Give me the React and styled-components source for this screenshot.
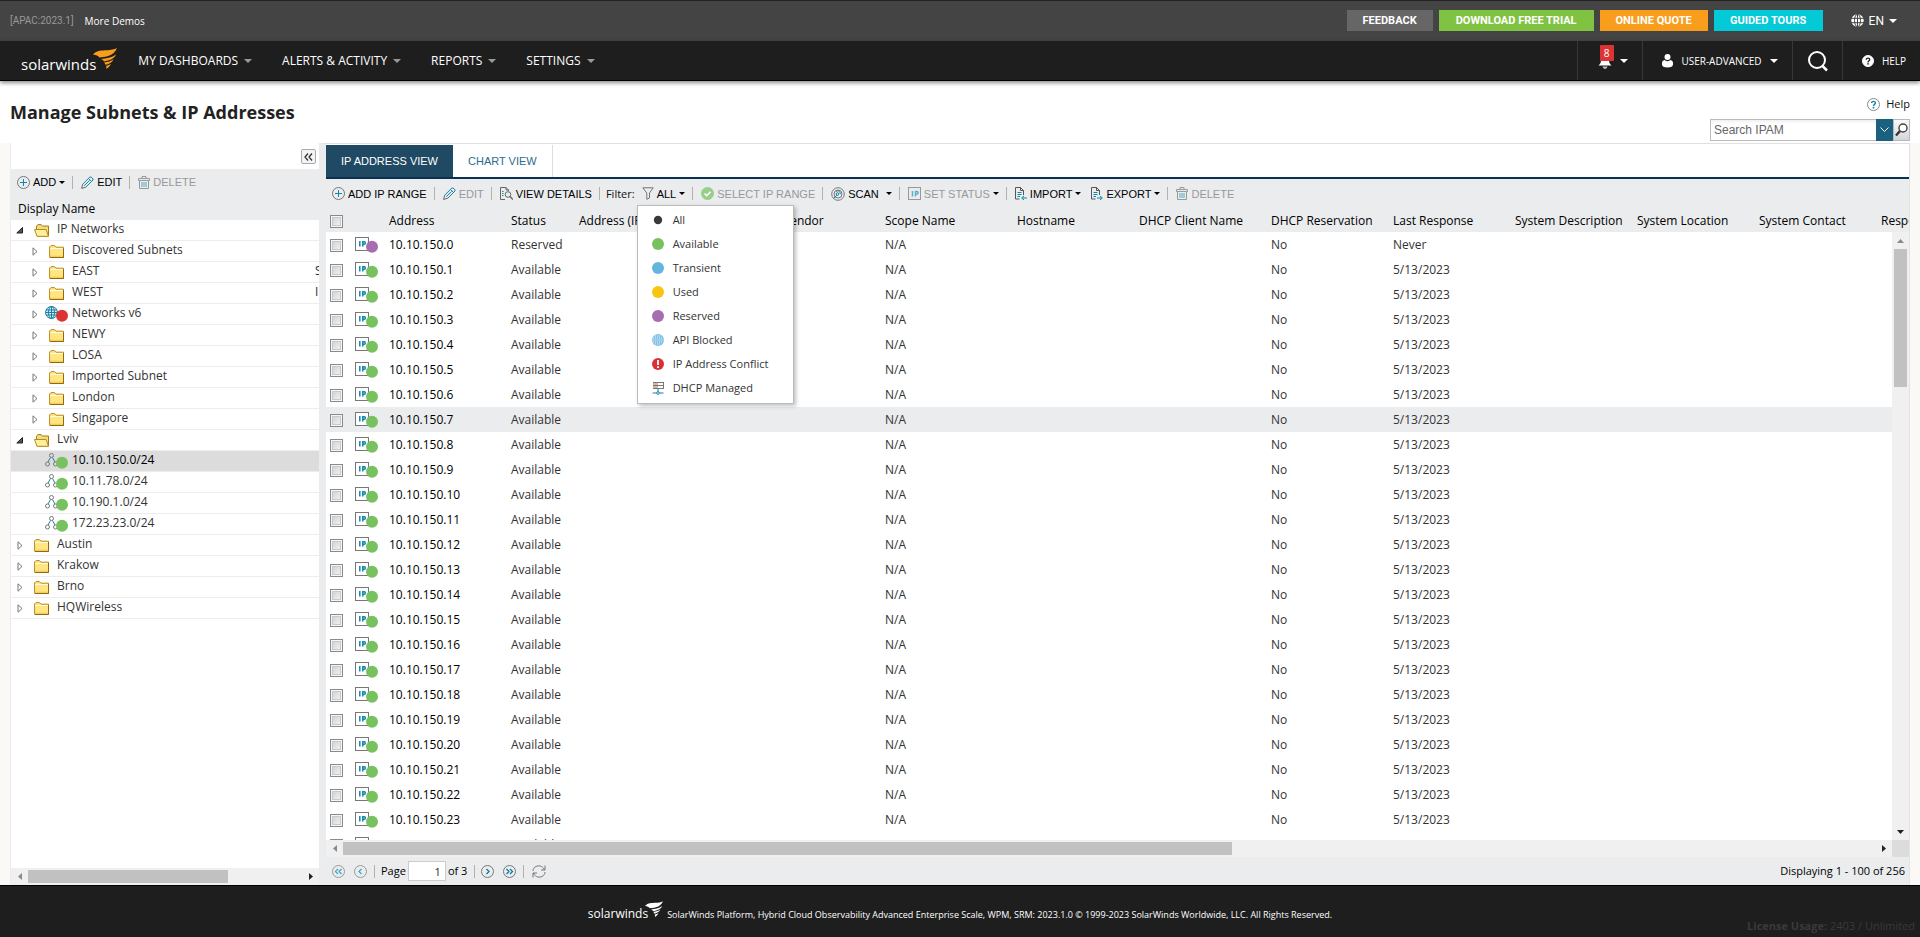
import React, { useState } from 'react';
import styled, { createGlobalStyle } from 'styled-components';

const treeRows = [
  { label: 'IP Networks', level: 0, icon: 'open', open: true },
  { label: 'Discovered Subnets', level: 1, icon: 'folder' },
  { label: 'EAST', level: 1, icon: 'folder', extra: 'S' },
  { label: 'WEST', level: 1, icon: 'folder', extra: 'I' },
  { label: 'Networks v6', level: 1, icon: 'globe' },
  { label: 'NEWY', level: 1, icon: 'folder' },
  { label: 'LOSA', level: 1, icon: 'folder' },
  { label: 'Imported Subnet', level: 1, icon: 'folder' },
  { label: 'London', level: 1, icon: 'folder' },
  { label: 'Singapore', level: 1, icon: 'folder' },
  { label: 'Lviv', level: 0, icon: 'open', open: true },
  { label: '10.10.150.0/24', level: 1, icon: 'subnet', leaf: true, selected: true },
  { label: '10.11.78.0/24', level: 1, icon: 'subnet', leaf: true },
  { label: '10.190.1.0/24', level: 1, icon: 'subnet', leaf: true },
  { label: '172.23.23.0/24', level: 1, icon: 'subnet', leaf: true },
  { label: 'Austin', level: 0, icon: 'folder' },
  { label: 'Krakow', level: 0, icon: 'folder' },
  { label: 'Brno', level: 0, icon: 'folder' },
  { label: 'HQWireless', level: 0, icon: 'folder' },
];

const columns = [
  { name: 'Address', width: 122 },
  { name: 'Status', width: 68 },
  { name: 'Address (IPv6)', width: 102 },
  { name: 'MAC', width: 102 },
  { name: 'Vendor', width: 102 },
  { name: 'Scope Name', width: 132 },
  { name: 'Hostname', width: 122 },
  { name: 'DHCP Client Name', width: 132 },
  { name: 'DHCP Reservation', width: 122 },
  { name: 'Last Response', width: 122 },
  { name: 'System Description', width: 122 },
  { name: 'System Location', width: 122 },
  { name: 'System Contact', width: 122 },
  { name: 'Response Time', width: 122 },
];

const addresses = Array.from({ length: 25 }, (_, i) => ({
  ip: `10.10.150.${i}`,
  status: i === 0 ? 'Reserved' : 'Available',
  last: i === 0 ? 'Never' : '5/13/2023',
}));

const filters = ['All', 'Available', 'Transient', 'Used', 'Reserved', 'API Blocked', 'IP Address Conflict', 'DHCP Managed'];

const statusColors = {
  Available: '#77c25f',
  Transient: '#65b5e0',
  Used: '#f8c611',
  Reserved: '#a66eb0',
};

/* icons */

const Swirl = ({ color, width, height }) => (
  <svg width={width} height={height} viewBox="0 0 24 21" fill={color} aria-hidden="true">
    <path d="M0 6.5C4 2 9 2.500 14 2.200C18 2 21 1.500 24 0C22.500 4 19 7 14.500 8.200C11 9.200 9 9 6.500 9.500C5.500 8 3 6.800 0 6.500Z" />
    <path d="M8 11C13 10.500 19 9.500 23 6.500C21.500 10.500 16.500 12.500 11 13.500C10.500 12.500 9.500 11.500 8 11Z" />
    <path d="M11 14.500C15 14 18 13 20.500 11.200C19.500 14 16.500 15.800 12.500 16.800C12.300 16 11.700 15 11 14.500Z" />
    <path d="M13 17.800C15 17.400 16.500 16.800 18 15.700C17 18 15.500 19.700 13.200 21C13.500 20 13.500 18.800 13 17.800Z" />
  </svg>
);

const GlobeIcon = () => (
  <svg width="13" height="13" viewBox="0 0 13 13" fill="none" aria-hidden="true">
    <circle cx="6.500" cy="6.500" r="6.200" fill="#fff" />
    <path d="M0 4.300H13M0 8.700H13M6.500 0V13" stroke="#444" />
    <ellipse cx="6.500" cy="6.500" rx="3" ry="6.200" stroke="#444" />
  </svg>
);

const BellIcon = () => (
  <svg width="14" height="16" viewBox="0 0 14 16" fill="#fff" aria-hidden="true">
    <path d="M7 1C4 1 3 4 3 7C3 9.500 2.500 10.500 0.500 12.500H13.500C11.500 10.500 11 9.500 11 7C11 4 10 1 7 1Z" />
    <path d="M4.500 13.500H9.500C9.200 15 8.200 16 7 16C5.800 16 4.800 15 4.500 13.500Z" fill="#bbb" />
  </svg>
);

const UserIcon = () => (
  <svg width="11" height="14" viewBox="0 0 11 14" fill="#fff" aria-hidden="true">
    <circle cx="5.500" cy="3" r="3" />
    <path d="M0 9C0 7.500 1 6.300 2.500 6C4 7.500 7 7.500 8.500 6C10 6.300 11 7.500 11 9V10.500C11 12.500 9 13.500 5.500 13.500C2 13.500 0 12.500 0 10.500Z" />
  </svg>
);

const SearchIcon = () => (
  <svg width="22" height="22" viewBox="0 0 22 22" fill="none" stroke="#fff" strokeWidth="2" aria-hidden="true">
    <circle cx="10" cy="10" r="8" />
    <path d="M15.500 16L20 20.500" strokeWidth="2.500" />
  </svg>
);

const QuestionIcon = ({ ring, fill, mark, size }) => (
  <svg width={size} height={size} viewBox="0 0 13 13" aria-hidden="true">
    <circle cx="6.500" cy="6.500" r="6" fill={fill} stroke={ring} />
    <path d="M4.600 5.100C4.600 2.800 8.400 2.900 8.400 5C8.400 6.400 6.500 6.300 6.500 8" fill="none" stroke={mark} strokeWidth="1.400" />
    <circle cx="6.500" cy="9.700" r="0.900" fill={mark} />
  </svg>
);

const LensIcon = () => (
  <svg width="13" height="14" viewBox="0 0 13 14" fill="none" aria-hidden="true">
    <circle cx="8" cy="5" r="4" stroke="#444" strokeWidth="1.400" fill="#fff" />
    <path d="M5 8L1 12.500" stroke="#333" strokeWidth="2.400" />
  </svg>
);

const PlusIcon = () => (
  <svg width="13" height="13" viewBox="0 0 13 13" fill="none" aria-hidden="true">
    <circle cx="6.500" cy="6.500" r="6" stroke="#777" />
    <path d="M6.500 3V10M3 6.500H10" stroke="#0f87ad" />
  </svg>
);

const PencilIcon = () => (
  <svg width="13" height="13" viewBox="0 0 13 13" fill="none" stroke="#1583a5" aria-hidden="true">
    <path d="M1.700 8.200L8.900 1C9.800 0.200 12.800 3 12 4L4.800 11.200" />
    <path d="M7.500 2.500L10.500 5.500M3.200 9.700L8.500 4.500" />
    <path d="M1.700 8.200L0.600 12.400L4.800 11.200" stroke="#666" />
  </svg>
);

const TrashIcon = () => (
  <svg width="12" height="13" viewBox="0 0 12 13" fill="none" stroke="#999" aria-hidden="true">
    <path d="M0.500 4.500V2.500H11.500V4.500H0.500M4 2V0.500H8V2M1.500 5V12.500H10.500V5" />
    <path d="M4 6V11M6 6V11M8 6V11" stroke="#53a9c4" />
  </svg>
);

const DetailsIcon = () => (
  <svg width="13" height="13" viewBox="0 0 13 13" fill="none" stroke="#666" aria-hidden="true">
    <path d="M5 12.500H0.500V0.500H6L8.500 3V4M6 0.500V3H8.500" />
    <circle cx="8" cy="7.500" r="2.800" />
    <path d="M10 9.500L13 12.500" strokeWidth="1.400" />
    <path d="M2 4.500H3.500M2 6.500H3.500M2 8.500H3.500" stroke="#0f87ad" />
  </svg>
);

const FunnelIcon = () => (
  <svg width="12" height="13" viewBox="0 0 12 13" fill="none" stroke="#777" aria-hidden="true">
    <path d="M0.800 0.800H11.200L7.500 6V11L4.800 12.300V6Z" />
  </svg>
);

const CheckIcon = () => (
  <svg width="13" height="13" viewBox="0 0 13 13" fill="none" aria-hidden="true">
    <circle cx="6.500" cy="6.500" r="6.500" fill="#97cf88" />
    <path d="M3.500 6.500L5.700 8.700L9.500 4.800" stroke="#fff" strokeWidth="1.600" />
  </svg>
);

const ScanIcon = () => (
  <svg width="14" height="14" viewBox="0 0 14 14" fill="none" stroke="#777" aria-hidden="true">
    <circle cx="7" cy="7" r="6.300" />
    <circle cx="7" cy="7" r="4" />
    <path d="M2.500 11.500L6 8M5 4.500C7 3 9.500 4.500 9.300 7" stroke="#0f87ad" />
    <circle cx="6.500" cy="7" r="1.300" stroke="#0f87ad" />
  </svg>
);

const IpBox = () => (
  <svg width="13" height="13" viewBox="0 0 13 13" fill="none" aria-hidden="true">
    <rect x="0.500" y="0.500" width="12" height="12" stroke="#999" />
    <path d="M4.500 4V9.500M7.500 9.500V4.500H9C10.500 4.500 10.500 7 9 7H8" stroke="#5ab2cd" strokeWidth="1.500" />
  </svg>
);

const FileIcon = ({ out }) => (
  <svg width="12" height="13" viewBox="0 0 12 13" fill="none" stroke="#555" aria-hidden="true">
    <path d="M4.500 12H0.500V0.500H5.500L8.500 3.500V8M5.500 0.500V3.500H8.500" />
    <path d="M2.500 5.500H6.500M2.500 7.500H6.500M2.500 9.500H5" stroke="#0f87ad" />
    <path d={out ? 'M6 11H11M9 9L11.300 11L9 13' : 'M12 11H7M9 9L6.700 11L9 13'} stroke="#0f87ad" />
  </svg>
);

const FolderIcon = ({ open }) => (
  <svg width="16" height="13" viewBox="0 0 16 13" aria-hidden="true">
    {open ? (
      <>
        <path d="M2.500 11V2L4 0.600H7L8.500 2H14.500V12H4Z" fill="#f3dc80" stroke="#a87a14" />
        <path d="M0.500 5.500H12L14.500 12.300H3Z" fill="#fff0a0" stroke="#b98b1c" />
      </>
    ) : (
      <>
        <path d="M0.600 12V2L2 0.600H5.500L7 2.200H14.500V12.300H0.600Z" fill="#ffe680" stroke="#b98b1c" />
        <path d="M1.500 4.500V3.500H14" stroke="#fffbe0" fill="none" />
        <path d="M1 11.200H14" stroke="#f5c95a" />
        <path d="M14.500 3V12.500H1" stroke="#96690f" fill="none" />
      </>
    )}
  </svg>
);

const NetGlobeIcon = () => (
  <svg width="24" height="16" viewBox="0 0 24 16" fill="none" aria-hidden="true">
    <circle cx="6.500" cy="6.500" r="6" fill="#d8eef5" stroke="#1d7f9d" />
    <ellipse cx="6.500" cy="6.500" rx="3" ry="6" stroke="#1d7f9d" />
    <path d="M1 4H12M0.500 6.500H12.500M1 9H12M6.500 0.500V12.500" stroke="#1d7f9d" />
    <circle cx="17" cy="9.800" r="6" fill="#dc3434" />
  </svg>
);

const SubnetIcon = () => (
  <svg width="24" height="16" viewBox="0 0 24 16" fill="none" stroke="#777" aria-hidden="true">
    <path d="M5.500 4.500L3 9M7.500 4.500L10 9" stroke="#1d7f9d" />
    <circle cx="6.500" cy="2.500" r="2" />
    <circle cx="2.500" cy="11" r="2" />
    <circle cx="10.500" cy="11" r="2" />
    <circle cx="17" cy="9.800" r="6" fill="#77c25f" stroke="none" />
  </svg>
);

const IpStatusIcon = ({ color }) => (
  <svg width="23" height="16" viewBox="0 0 23 16" fill="none" aria-hidden="true">
    <rect x="0.500" y="0.500" width="13" height="13" fill="#fff" stroke="#777" />
    <path d="M4.800 4V9.500M7.800 9.500V4.700H9.200C10.700 4.700 10.700 7.200 9.200 7.200H8" stroke="#0f87ad" strokeWidth="1.500" />
    <circle cx="17" cy="9.800" r="6" fill={color} />
  </svg>
);

const FilterIcon = ({ name }) => (
  <svg width="14" height="14" viewBox="0 0 14 14" fill="none" aria-hidden="true">
    {name === 'All' && <circle cx="7" cy="7" r="4.200" fill="#3a3a3a" />}
    {statusColors[name] && <circle cx="7" cy="7" r="6" fill={statusColors[name]} />}
    {name === 'API Blocked' && (
      <>
        <circle cx="7" cy="7" r="6" fill="#7fc0e4" />
        <path d="M2 5H12M1.500 7H12.500M2 9H12M4 11H10M4 3H10" stroke="#e6f4fb" strokeDasharray="1 1" />
      </>
    )}
    {name === 'IP Address Conflict' && (
      <>
        <circle cx="7" cy="7" r="6" fill="#dc2f35" />
        <path d="M7 3V8M7 9.200V11" stroke="#fff" strokeWidth="1.800" />
      </>
    )}
    {name === 'DHCP Managed' && (
      <>
        <path d="M2 1.500H12.500M2 4.500H12.500M2 7.500H12.500M12.500 1V8" stroke="#777" />
        <path d="M2 3H7M2 6H7" stroke="#b06a4a" />
        <path d="M7 8V11M1.500 12H5.500M8.500 12H12.500" stroke="#1583a5" />
        <circle cx="7" cy="12" r="1.300" stroke="#1583a5" />
      </>
    )}
  </svg>
);

const PageIcon = ({ path, muted }) => (
  <svg width="13" height="13" viewBox="0 0 13 13" fill="none" aria-hidden="true">
    <circle cx="6.500" cy="6.500" r="6" stroke={muted ? '#999' : '#777'} />
    <path d={path} stroke={muted ? '#45a6c4' : '#0b79a8'} strokeWidth="1.300" />
  </svg>
);

const RefreshIcon = () => (
  <svg width="14" height="13" viewBox="0 0 14 13" fill="none" stroke="#777" aria-hidden="true">
    <path d="M1 6C1 2 6 -0.500 9.500 1.500C11 2.300 12 3.500 12.500 5M13 0.500V5H9" />
    <path d="M13 7C13 11 8 13.500 4.500 11.500C3 10.700 2 9.500 1.500 8M1 12.500V8H5" />
  </svg>
);

const Arrow = ({ dir, dark }) => {
  const paths = {
    left: 'M6 0V7L2 3.500Z',
    right: 'M2 0V7L6 3.500Z',
    up: 'M0 6H7L3.500 2Z',
    down: 'M0 2H7L3.500 6Z',
  };
  return (
    <svg width="7" height="7" viewBox="0 0 7 7" fill={dark ? '#222' : '#8a8a8a'} aria-hidden="true">
      <path d={paths[dir]} />
    </svg>
  );
};

const ExpandIcon = ({ open }) => (
  <svg width="8" height="9" viewBox="0 0 8 9" aria-hidden="true">
    {open ? <path d="M6.500 1.500V7H0.800Z" fill="#555" stroke="#222" /> : <path d="M2 0.800V8.200L6 4.500Z" fill="#fff" stroke="#777" />}
  </svg>
);

function Tool({ icon, label, caret, disabled }) {
  return (
    <ToolButton type="button" disabled={disabled}>
      {icon}
      <span>{label}</span>
      {caret && <Caret $size={3} $color="#000" $wide={caret === 'wide'} />}
    </ToolButton>
  );
}

function ScrollBar({ vertical, thumb }) {
  return (
    <Track $vertical={vertical}>
      <ScrollButton type="button" aria-label={vertical ? 'Scroll up' : 'Scroll left'}>
        <Arrow dir={vertical ? 'up' : 'left'} />
      </ScrollButton>
      <Rail $vertical={vertical}>
        <Thumb style={{ flexBasis: thumb }} />
      </Rail>
      <ScrollButton type="button" aria-label={vertical ? 'Scroll down' : 'Scroll right'}>
        <Arrow dir={vertical ? 'down' : 'right'} dark />
      </ScrollButton>
    </Track>
  );
}

function Header() {
  return (
    <header>
      <TopBar>
        <Version>[APAC:2023.1]</Version>
        <DemoLink href="#">More Demos</DemoLink>
        <TopActions>
          <Promo type="button" $bg="#666" $width={86}>FEEDBACK</Promo>
          <Promo type="button" $bg="#80c342" $width={155}>DOWNLOAD FREE TRIAL</Promo>
          <Promo type="button" $bg="#f99d1c" $width={108}>ONLINE QUOTE</Promo>
          <Promo type="button" $bg="#04c9d7" $width={109}>GUIDED TOURS</Promo>
          <Language type="button">
            <GlobeIcon />
            EN
            <Caret $size={4} $color="#fff" />
          </Language>
        </TopActions>
      </TopBar>
      <NavBar>
        <Logo href="#">
          <span>solarwinds</span>
          <Swirl color="#f99d1c" width={24} height={21} />
        </Logo>
        <Menu>
          {['MY DASHBOARDS', 'ALERTS & ACTIVITY', 'REPORTS', 'SETTINGS'].map((item) => (
            <MenuButton type="button" key={item}>
              {item}
              <Caret $size={4} $color="#999" />
            </MenuButton>
          ))}
        </Menu>
        <NavCell type="button" $width={65} $pad={5} aria-label="Notifications">
          <BellWrap>
            <BellIcon />
            <Badge>8</Badge>
          </BellWrap>
          <Caret $size={4} $color="#fff" />
        </NavCell>
        <NavCell type="button" $width={150} $pad={5}>
          <UserIcon />
          USER-ADVANCED
          <Caret $size={4} $color="#fff" />
        </NavCell>
        <NavCell type="button" $width={50} aria-label="Search">
          <SearchIcon />
        </NavCell>
        <NavCell type="button" $width={78} $pad={5}>
          <QuestionIcon size={12} ring="#fff" fill="#fff" mark="#1e1e1e" />
          HELP
        </NavCell>
      </NavBar>
    </header>
  );
}

function Sidebar() {
  return (
    <SidePanel>
      <CollapseBar>
        <CollapseButton type="button" aria-label="Collapse panel">
          <svg width="9" height="8" viewBox="0 0 9 8" fill="none" stroke="#333" strokeWidth="1.300" aria-hidden="true">
            <path d="M4 0.500L1 4L4 7.500M8 0.500L5 4L8 7.500" />
          </svg>
        </CollapseButton>
      </CollapseBar>
      <Toolbar $side>
        <Tool icon={<PlusIcon />} label="ADD" caret />
        <Separator />
        <Tool icon={<PencilIcon />} label="EDIT" />
        <Separator />
        <Tool icon={<TrashIcon />} label="DELETE" disabled />
      </Toolbar>
      <TreeHead>Display Name</TreeHead>
      <Tree>
        {treeRows.map((row) => (
          <TreeRow key={row.label} $selected={row.selected}>
            <TreeItem type="button" $level={row.level} $wide={row.icon === 'globe'} $leaf={row.leaf}>
              {!row.leaf && <ExpandIcon open={row.open} />}
              {row.icon === 'open' && <FolderIcon open />}
              {row.icon === 'folder' && <FolderIcon />}
              {row.icon === 'globe' && <NetGlobeIcon />}
              {row.icon === 'subnet' && <SubnetIcon />}
              <span>{row.label}</span>
            </TreeItem>
            <TreeExtra>{row.extra}</TreeExtra>
          </TreeRow>
        ))}
      </Tree>
      <ScrollBar thumb="73%" />
    </SidePanel>
  );
}

function FilterMenu() {
  return (
    <FilterWrap>
      <Tool icon={<FunnelIcon />} label="ALL" caret />
      <Dropdown>
        {filters.map((name) => (
          <li key={name}>
            <DropdownItem type="button">
              <FilterIcon name={name} />
              {name}
            </DropdownItem>
          </li>
        ))}
      </Dropdown>
    </FilterWrap>
  );
}

function AddressTable() {
  return (
    <TableArea>
      <Table>
        <colgroup>
          <col style={{ width: 24 }} />
          <col style={{ width: 34 }} />
          {columns.map((c) => <col key={c.name} style={{ width: c.width }} />)}
        </colgroup>
        <thead>
          <tr>
            <th><Checkbox type="checkbox" aria-label="Select all" /></th>
            <th />
            {columns.map((c) => <th key={c.name}>{c.name}</th>)}
          </tr>
        </thead>
        <tbody>
          {addresses.map((row, i) => (
            <BodyRow key={row.ip} $active={i === 7}>
              <td><Checkbox type="checkbox" aria-label={`Select ${row.ip}`} /></td>
              <td><IpStatusIcon color={statusColors[row.status]} /></td>
              <td>{row.ip}</td>
              <td>{row.status}</td>
              <td />
              <td />
              <td />
              <td>N/A</td>
              <td />
              <td />
              <td>No</td>
              <td>{row.last}</td>
              <td />
              <td />
              <td />
              <td />
            </BodyRow>
          ))}
        </tbody>
      </Table>
      <VerticalScroll>
        <ScrollBar vertical thumb="24%" />
      </VerticalScroll>
    </TableArea>
  );
}

function App() {
  const [page, setPage] = useState('1');
  const [query, setQuery] = useState('');
  return (
    <Page>
      <GlobalStyle />
      <Header />
      <TitleBar>
        <h1>Manage Subnets &amp; IP Addresses</h1>
        <TitleSide>
          <HelpLink href="#">
            <QuestionIcon size={13} ring="#888" fill="#fff" mark="#0f87ad" />
            Help
          </HelpLink>
          <SearchBox>
            <input type="text" placeholder="Search IPAM" aria-label="Search IPAM" value={query} onChange={(e) => setQuery(e.target.value)} />
            <SearchOptions type="button" aria-label="Search options">
              <svg width="9" height="6" viewBox="0 0 9 6" fill="none" stroke="#fff" aria-hidden="true">
                <path d="M0.500 0.500L4.500 4.500L8.500 0.500" />
              </svg>
            </SearchOptions>
            <SearchGo type="button" aria-label="Run search"><LensIcon /></SearchGo>
          </SearchBox>
        </TitleSide>
      </TitleBar>
      <Workspace>
        <Sidebar />
        <MainPanel>
          <Tabs>
            <Tab type="button" $active>IP ADDRESS VIEW</Tab>
            <Tab type="button">CHART VIEW</Tab>
          </Tabs>
          <Toolbar>
            <Tool icon={<PlusIcon />} label="ADD IP RANGE" />
            <Separator />
            <Tool icon={<PencilIcon />} label="EDIT" disabled />
            <Separator />
            <Tool icon={<DetailsIcon />} label="VIEW DETAILS" />
            <Separator $tight />
            <FilterLabel>Filter:</FilterLabel>
            <FilterMenu />
            <Separator />
            <Tool icon={<CheckIcon />} label="SELECT IP RANGE" disabled />
            <Separator />
            <Tool icon={<ScanIcon />} label="SCAN" caret="wide" />
            <Separator />
            <Tool icon={<IpBox />} label="SET STATUS" caret disabled />
            <Separator />
            <Tool icon={<FileIcon />} label="IMPORT" caret />
            <ToolGap />
            <Tool icon={<FileIcon out />} label="EXPORT" caret />
            <Separator />
            <Tool icon={<TrashIcon />} label="DELETE" disabled />
          </Toolbar>
          <AddressTable />
          <BottomScroll>
            <ScrollBar thumb="58%" />
            <Corner />
          </BottomScroll>
          <Pager>
            <PageButton type="button" aria-label="First page" disabled>
              <PageIcon muted path="M6 4L3.500 6.500L6 9M9.500 4L7 6.500L9.500 9" />
            </PageButton>
            <PageButton type="button" aria-label="Previous page" disabled>
              <PageIcon muted path="M7.500 4L5 6.500L7.500 9" />
            </PageButton>
            <Separator $tight />
            <label htmlFor="page">Page</label>
            <PageInput id="page" type="text" value={page} onChange={(e) => setPage(e.target.value)} />
            <span>of 3</span>
            <Separator $tight />
            <PageButton type="button" aria-label="Next page">
              <PageIcon path="M5.500 4L8 6.500L5.500 9" />
            </PageButton>
            <PageButton type="button" aria-label="Last page">
              <PageIcon path="M3.500 4L6 6.500L3.500 9M7 4L9.500 6.500L7 9" />
            </PageButton>
            <Separator />
            <PageButton type="button" aria-label="Refresh"><RefreshIcon /></PageButton>
            <Displaying>Displaying 1 - 100 of 256</Displaying>
          </Pager>
        </MainPanel>
      </Workspace>
      <Footer>
        <FooterMain>
          <FooterLogo>
            <span>solarwinds</span>
            <Swirl color="#fff" width={18} height={16} />
          </FooterLogo>
          <p>SolarWinds Platform, Hybrid Cloud Observability Advanced Enterprise Scale, WPM, SRM: 2023.1.0 © 1999-2023 SolarWinds Worldwide, LLC. All Rights Reserved.</p>
        </FooterMain>
        <License><b>License Usage:</b> 2403 / Unlimited</License>
      </Footer>
    </Page>
  );
}

export default App;

const GlobalStyle = createGlobalStyle`
  *, *::before, *::after {
    box-sizing: border-box;
  }
  body {
    margin: 0;
    background: #fff;
    color: #111;
    font-family: 'Open Sans', sans-serif;
    font-size: 12px;
  }
  button {
    border: 0;
    padding: 0;
    margin: 0;
    background: none;
    color: inherit;
    font: inherit;
    cursor: pointer;
  }
  button:disabled {
    cursor: default;
  }
  a {
    color: inherit;
    text-decoration: none;
  }
  svg {
    display: block;
    flex: none;
  }
`;

const Page = styled.div`
  display: flex;
  flex-direction: column;
  height: 100vh;
  min-height: 480px;
`;

const Caret = styled.span`
  width: 0;
  height: 0;
  border: ${(p) => p.$size}px solid transparent;
  border-top-color: ${(p) => p.$color};
  border-bottom: 0;
  margin-left: ${(p) => (p.$wide ? '4px' : '0')};
`;

const TopBar = styled.div`
  display: flex;
  align-items: center;
  height: 41px;
  padding: 0 22px 1px 10px;
  background: #444;
  border-top: 1px solid #222;
`;

const Version = styled.span`
  color: #999;
  font: 10px/16px Roboto, sans-serif;
  margin-right: 11px;
`;

const DemoLink = styled.a`
  color: #fff;
  font-size: 10px;
  line-height: 16px;
`;

const TopActions = styled.div`
  display: flex;
  align-items: center;
  gap: 6px;
  margin-left: auto;
`;

const Promo = styled.button`
  width: ${(p) => p.$width}px;
  height: 21px;
  background: ${(p) => p.$bg};
  color: #fff;
  font: bold 11px/21px Roboto, sans-serif;
`;

const Language = styled.button`
  display: flex;
  align-items: center;
  gap: 5px;
  margin-left: 22px;
  padding-right: 1px;
  color: #fff;
  font: 12px/16px Roboto, sans-serif;
`;

const NavBar = styled.nav`
  position: relative;
  display: flex;
  height: 40px;
  padding-left: 21px;
  background: #1e1e1e;
  border-bottom: 1px solid #000;
  box-shadow: 0 2px 4px rgba(0, 0, 0, 0.45);
`;

const Logo = styled.a`
  display: flex;
  align-items: flex-start;
  padding-top: 7px;
  color: #fff;
  span {
    font-size: 15px;
    line-height: 20px;
    padding-top: 6px;
    margin-right: -3px;
  }
`;

const Menu = styled.div`
  display: flex;
  gap: 30px;
  flex: 1;
  padding-left: 21px;
`;

const MenuButton = styled.button`
  display: flex;
  align-items: center;
  gap: 6px;
  color: #fff;
  font-size: 12px;
  line-height: 16px;
  white-space: nowrap;
`;

const NavCell = styled.button`
  display: flex;
  align-items: center;
  justify-content: center;
  gap: 8px;
  width: ${(p) => p.$width}px;
  padding-left: ${(p) => p.$pad || 0}px;
  border-left: 1px solid #383838;
  color: #fff;
  font-size: 10px;
  line-height: 16px;
`;

const BellWrap = styled.span`
  position: relative;
`;

const Badge = styled.span`
  position: absolute;
  top: -8px;
  left: 2px;
  width: 14px;
  height: 16px;
  border-radius: 1px;
  background: #dc3434;
  color: #fff;
  font-size: 10px;
  line-height: 16px;
  text-align: center;
`;

const TitleBar = styled.div`
  display: flex;
  justify-content: space-between;
  height: 62px;
  padding: 0 10px;
  h1 {
    margin: 0;
    padding-top: 19px;
    font-size: 18px;
    font-weight: 700;
    line-height: 24px;
    color: #222;
  }
`;

const TitleSide = styled.div`
  display: flex;
  flex-direction: column;
  align-items: flex-end;
  gap: 7px;
  padding-top: 15px;
`;

const HelpLink = styled.a`
  display: flex;
  align-items: center;
  gap: 6px;
  font-size: 11px;
  line-height: 16px;
`;

const SearchBox = styled.div`
  display: flex;
  height: 22px;
  width: 200px;
  input {
    flex: 1;
    min-width: 0;
    border: 1px solid #bbb;
    border-right: 0;
    padding: 0 3px;
    background: linear-gradient(#eef0f2, #fff 4px);
    font: 12px 'Liberation Sans', Arial, sans-serif;
  }
  input::placeholder {
    color: #666;
    opacity: 1;
  }
`;

const SearchOptions = styled.button`
  display: flex;
  align-items: center;
  justify-content: center;
  width: 17px;
  background: #1b607f;
`;

const SearchGo = styled.button`
  display: flex;
  align-items: center;
  justify-content: center;
  width: 17px;
  border: 1px solid #b5b8c8;
  background: linear-gradient(#fafafa, #d5d5d5);
`;

const Workspace = styled.main`
  display: flex;
  flex: 1;
  min-height: 0;
  padding: 0 10px;
  background: #faf9f5;
`;

const SidePanel = styled.aside`
  display: flex;
  flex-direction: column;
  width: 309px;
  flex: none;
  background: #fff;
  border-left: 1px solid #ebecee;
`;

const CollapseBar = styled.div`
  display: flex;
  justify-content: flex-end;
  height: 26px;
  padding: 6px 3px 0 0;
`;

const CollapseButton = styled.button`
  display: flex;
  align-items: center;
  justify-content: center;
  width: 15px;
  height: 15px;
  border: 1px solid #aaa;
  border-radius: 2px;
  background: #f4f4f4;
`;

const Toolbar = styled.div`
  display: flex;
  align-items: center;
  flex: none;
  height: ${(p) => (p.$side ? '26px' : '29px')};
  padding-left: 6px;
  background: #ebecee;
`;

const ToolButton = styled.button`
  display: flex;
  align-items: center;
  gap: 3px;
  color: #000;
  font: 11px/16px 'Liberation Sans', Arial, sans-serif;
  white-space: nowrap;
  &:disabled {
    color: #999;
  }
`;

const Separator = styled.span`
  width: 1px;
  height: 13px;
  margin: 0 ${(p) => (p.$tight ? 6 : 8)}px 0 7px;
  background: #b5b1a6;
`;

const ToolGap = styled.span`
  width: 10px;
`;

const TreeHead = styled.div`
  flex: none;
  height: 25px;
  padding-left: 7px;
  background: #ebecee;
  line-height: 28px;
  color: #000;
`;

const Tree = styled.ul`
  flex: 1;
  min-height: 0;
  overflow: hidden;
  margin: 0;
  padding: 0;
  list-style: none;
`;

const TreeRow = styled.li`
  display: flex;
  height: 21px;
  border-bottom: 1px solid #ededed;
  background: ${(p) => (p.$selected ? '#dcdcdc' : '#fff')};
  color: ${(p) => (p.$selected ? '#000' : '#333')};
`;

const TreeItem = styled.button`
  display: flex;
  align-items: center;
  flex: 1;
  padding-left: ${(p) => (p.$leaf ? 34 : 5 + p.$level * 15)}px;
  line-height: 16px;
  svg:first-child {
    margin-right: ${(p) => (p.$leaf ? 3 : p.$wide ? 6 : 10)}px;
  }
  span {
    margin-left: ${(p) => (p.$leaf ? 0 : p.$wide ? 3 : 7)}px;
    padding-bottom: 2px;
  }
`;

const TreeExtra = styled.span`
  width: 4px;
  overflow: hidden;
  line-height: 18px;
`;

const Track = styled.div`
  display: flex;
  flex-direction: ${(p) => (p.$vertical ? 'column' : 'row')};
  flex: ${(p) => (p.$vertical ? '1' : 'none')};
  ${(p) => (p.$vertical ? 'width: 17px;' : 'height: 17px;')}
  background: #f0f0f0;
`;

const ScrollButton = styled.button`
  display: flex;
  align-items: center;
  justify-content: center;
  width: 17px;
  height: 17px;
  flex: none;
`;

const Rail = styled.div`
  display: flex;
  flex-direction: ${(p) => (p.$vertical ? 'column' : 'row')};
  flex: 1;
  padding: ${(p) => (p.$vertical ? '0 2px' : '2px 0')};
`;

const Thumb = styled.div`
  background: #c1c1c1;
`;

const MainPanel = styled.section`
  display: flex;
  flex-direction: column;
  flex: 1;
  min-width: 0;
  border-left: 7px solid #ebecee;
  border-right: 1px solid #e3e3e6;
  border-top: 1px solid #e0e0e0;
  background: #ebecee;
`;

const Tabs = styled.div`
  display: flex;
  flex: none;
  height: 35px;
  padding-top: 1px;
  background: #fff;
  border-bottom: 2px solid #0b3152;
`;

const Tab = styled.button`
  padding: 0 15px;
  background: ${(p) => (p.$active ? '#204a63' : '#fff')};
  color: ${(p) => (p.$active ? '#fff' : '#2a6d8b')};
  border-right: ${(p) => (p.$active ? '0' : '1px solid #ddd')};
  font: 11px/16px 'Liberation Sans', Arial, sans-serif;
`;

const FilterLabel = styled.span`
  margin-right: 7px;
  font-size: 11px;
  line-height: 16px;
`;

const FilterWrap = styled.div`
  position: relative;
`;

const Dropdown = styled.ul`
  position: absolute;
  z-index: 5;
  top: 19px;
  left: -5px;
  width: 157px;
  margin: 0;
  padding: 2px 0 3px;
  list-style: none;
  background: #fff;
  border: 1px solid #bbb;
  box-shadow: 2px 2px 4px rgba(0, 0, 0, 0.25);
`;

const DropdownItem = styled.button`
  display: flex;
  align-items: center;
  gap: 8px;
  width: 100%;
  height: 24px;
  padding-left: 13px;
  color: #333;
  font-size: 11px;
  line-height: 16px;
`;

const TableArea = styled.div`
  position: relative;
  flex: 1;
  min-height: 0;
  overflow: hidden;
  background: #fff;
`;

const Table = styled.table`
  table-layout: fixed;
  width: 1672px;
  border-collapse: collapse;
  th {
    height: 24px;
    padding: 2px 0 0 5px;
    background: #ebecee;
    color: #000;
    font-weight: 400;
    line-height: 16px;
    text-align: left;
    white-space: nowrap;
  }
  td {
    height: 25px;
    padding: 0 0 0 5px;
    line-height: 16px;
    white-space: nowrap;
  }
  th:first-child, td:first-child {
    padding: 2px 0 0 4px;
  }
`;

const BodyRow = styled.tr`
  background: ${(p) => (p.$active ? '#ebecee' : '#fff')};
  color: #333;
  td:nth-child(3) {
    color: #000;
  }
`;

const Checkbox = styled.input`
  appearance: none;
  display: block;
  width: 13px;
  height: 13px;
  margin: 0;
  border: 1px solid #8a8a8a;
  background: linear-gradient(135deg, #c9cdd3, #f8f8f8);
  box-shadow: inset 0 0 0 1px #f6f6f6, inset 0 0 0 2px #c6c9ce;
`;

const VerticalScroll = styled.div`
  position: absolute;
  top: 24px;
  right: 0;
  bottom: 0;
  display: flex;
`;

const BottomScroll = styled.div`
  display: flex;
  flex: none;
  & > div:first-child {
    flex: 1;
  }
`;

const Corner = styled.div`
  width: 17px;
  background: #dcdcdc;
`;

const Pager = styled.div`
  display: flex;
  align-items: center;
  flex: none;
  height: 28px;
  padding: 0 4px 0 6px;
  font-size: 11px;
  line-height: 16px;
  color: #000;
`;

const PageButton = styled.button`
  & + & {
    margin-left: 9px;
  }
`;

const PageInput = styled.input`
  width: 38px;
  height: 20px;
  margin: 0 2px;
  padding: 0 4px;
  border: 1px solid #ccc;
  background: #fff;
  color: #222;
  font: 11px 'Open Sans', sans-serif;
  text-align: right;
`;

const Displaying = styled.span`
  margin-left: auto;
`;

const Footer = styled.footer`
  position: relative;
  flex: none;
  height: 52px;
  background: #1e1e1e;
  border-top: 1px solid #000;
  color: #fff;
`;

const FooterMain = styled.div`
  display: flex;
  justify-content: center;
  padding-top: 15px;
  p {
    margin: 0;
    padding: 6px 0 0 4px;
    font-size: 9px;
    line-height: 16px;
  }
`;

const FooterLogo = styled.div`
  display: flex;
  align-items: flex-start;
  span {
    padding-top: 5px;
    margin-right: -3px;
    font-size: 12px;
    line-height: 16px;
  }
`;

const License = styled.div`
  position: absolute;
  right: 5px;
  bottom: 2px;
  color: #3a3a3a;
  font-size: 11px;
  line-height: 18px;
`;
